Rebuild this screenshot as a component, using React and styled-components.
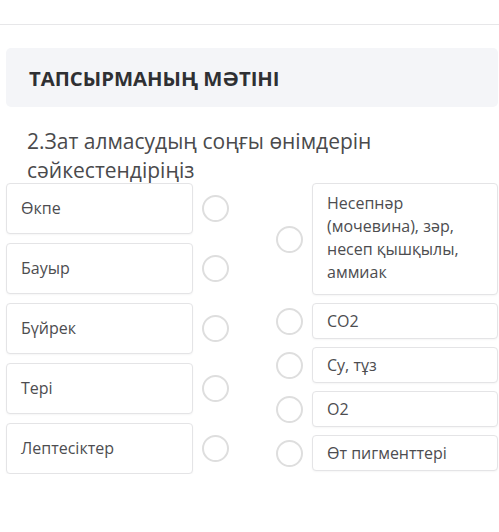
import React from 'react';
import styled, { createGlobalStyle } from 'styled-components';

const GlobalStyle = createGlobalStyle`
    html, body {
        margin: 0;
        padding: 0;
        background: #ffffff;
    }
    body {
        font-family: "Open Sans", "Noto Sans", sans-serif;
    }
`;

const Page = styled.div`
    width: 499px;
    padding-top: 24px;
    box-sizing: border-box;
`;

const TopLine = styled.div`
    height: 1px;
    background: #e7e7e9;
`;

const Content = styled.div`
    padding: 23px 1px 0 6px;
`;

const Header = styled.div`
    height: 59px;
    background: #f4f5f8;
    border-radius: 5px;
    display: flex;
    align-items: center;
    padding-left: 23px;
`;

const Title = styled.h2`
    margin: 0;
    font-size: 20.3px;
    font-weight: 700;
    color: #2f3033;
`;

const Question = styled.p`
    margin: 20px 0 0 21px;
    font-size: 21px;
    line-height: 29px;
    color: #4a4a4c;
`;

const Columns = styled.div`
    display: flex;
    justify-content: space-between;
    margin-top: -2px;
`;

const Column = styled.div`
    display: flex;
    flex-direction: column;
    gap: ${p => p.$gap}px;
    width: ${p => p.$width}px;
`;

const Row = styled.div`
    display: flex;
    align-items: center;
    gap: 9px;
`;

const Card = styled.div`
    flex: 1;
    box-sizing: border-box;
    min-height: ${p => p.$h}px;
    display: flex;
    align-items: center;
    padding: ${p => p.$pad};
    background: #fff;
    border: 1px solid #e4e4e6;
    border-radius: 4px;
    box-shadow: 0 1px 2px rgba(0, 0, 0, 0.04);
    font-size: 16px;
    line-height: 23px;
    color: #4d4d50;
`;

const Circle = styled.div`
    flex: none;
    width: 27px;
    height: 27px;
    box-sizing: border-box;
    border-radius: 50%;
    border: 2px solid #dedede;
    background: #fff;
`;

const left = ['Өкпе', 'Бауыр', 'Бүйрек', 'Тері', 'Лептесіктер'];
const right = [
    'Несепнәр (мочевина), зәр, несеп қышқылы, аммиак',
    'CO2',
    'Су, тұз',
    'O2',
    'Өт пигменттері',
];

export default function App() {
    return (
        <Page>
            <GlobalStyle />
            <TopLine />
            <Content>
                <Header>
                    <Title>ТАПСЫРМАНЫҢ МӘТІНІ</Title>
                </Header>
                <Question>2.Зат алмасудың соңғы өнімдерін сәйкестендіріңіз</Question>
                <Columns>
                    <Column $gap={9} $width={223}>
                        {left.map(t => (
                            <Row key={t}>
                                <Card $h={51} $pad="0 14px">{t}</Card>
                                <Circle />
                            </Row>
                        ))}
                    </Column>
                    <Column $gap={8} $width={222}>
                        {right.map((t, i) => (
                            <Row key={t}>
                                <Circle />
                                <Card $h={i === 0 ? 112 : 36} $pad={i === 0 ? '8px 14px 10px' : '0 14px'}>{t}</Card>
                            </Row>
                        ))}
                    </Column>
                </Columns>
            </Content>
        </Page>
    );
}
